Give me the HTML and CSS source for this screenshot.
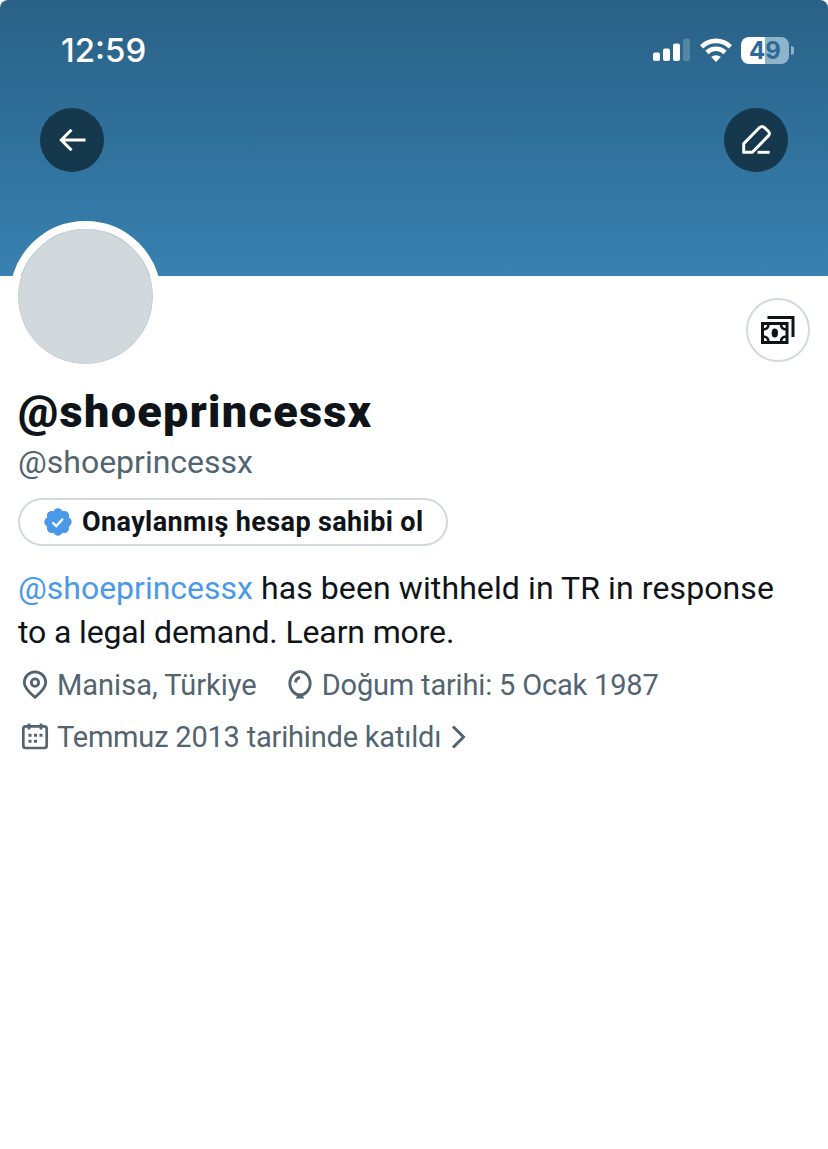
FILE: index.html
```html
<!DOCTYPE html>
<html lang="tr">
<head>
    <meta charset="UTF-8">
    <meta name="viewport" content="width=device-width, initial-scale=1.0">
    <title>@shoeprincessx</title>
    <link rel="stylesheet" href="styles.css">
</head>
<body>

<div class="banner">
    <div class="status-bar">
        <span class="time">12:59</span>
        <div class="status-icons">
            <svg class="signal" width="38" height="24" viewBox="0 0 38 24" fill="#fff">
                <rect x="0" y="14.500" width="7" height="8.500" rx="2"/>
                <rect x="10" y="10.500" width="7" height="12.500" rx="2"/>
                <rect x="20" y="5.500" width="7" height="17.500" rx="2"/>
                <rect x="30" y="0.500" width="7" height="22.500" rx="2" opacity="0.2"/>
            </svg>
            <svg class="wifi" width="32" height="24" viewBox="0 0 32 24" fill="none" stroke="#fff" stroke-width="4.600">
                <path d="M1.600 8.800a20.500 20.500 0 0 1 28.800 0"/>
                <path d="M6.900 14.500a13 13 0 0 1 18.200 0"/>
                <path d="M16 24l-4.800-4.900a7 7 0 0 1 9.600 0z" fill="#fff" stroke="none"/>
            </svg>
            <div class="battery"><span class="level">49</span></div>
            <div class="battery-cap"></div>
        </div>
    </div>
    <div class="actions">
        <div class="round-btn">
            <svg width="64" height="64" viewBox="0 0 64 64" fill="none" stroke="#fff" stroke-width="3">
                <path d="M45.500 32H21M31.500 21.800L21.300 32l10.200 10.200"/>
            </svg>
        </div>
        <div class="round-btn">
            <svg width="64" height="64" viewBox="0 0 64 64" fill="none" stroke="#fff" stroke-width="2.900">
                <path d="M19.700 44.300v-8.600l15.800-16.100q2.500-2.300 5 0l3.800 3.700q2.300 2.300 0 4.600L28.300 44.300z"/>
                <path d="M33.500 44.300h12.200"/>
            </svg>
        </div>
    </div>
</div>

<div class="profile">
    <div class="top-row">
        <div class="avatar"></div>
        <div class="money-btn">
            <svg width="36" height="30" viewBox="0 0 36 30" fill="none" stroke="#0f1419" stroke-width="3">
                <path d="M7.500 2.500h25.500v19.500"/>
                <rect x="2.500" y="8.500" width="24.500" height="19"/>
                <path d="M3 14.500q5.500 0 5.500-5.500M3 21.500q5.500 0 5.500 5.500M26.500 14.500q-5.500 0-5.500-5.500M26.500 21.500q-5.500 0-5.500 5.500" stroke-width="2.600"/>
                <ellipse cx="14.800" cy="18" rx="3.200" ry="4.600" fill="#0f1419" stroke="none"/>
            </svg>
        </div>
    </div>

    <h1 class="name">@shoeprincessx</h1>
    <div class="handle">@shoeprincessx</div>

    <div class="verify">
        <svg width="28" height="28" viewBox="1.500 1.500 21 21">
            <path fill="#4a99e9" d="M22.250 12c0-1.430-.880-2.670-2.190-3.340.460-1.390.200-2.900-.810-3.910s-2.520-1.270-3.910-.810c-.660-1.310-1.910-2.190-3.340-2.190s-2.670.880-3.330 2.190c-1.400-.460-2.910-.200-3.920.810s-1.260 2.520-.800 3.910c-1.310.670-2.200 1.910-2.200 3.340s.890 2.670 2.200 3.340c-.460 1.390-.210 2.900.800 3.910s2.520 1.260 3.910.810c.670 1.310 1.910 2.190 3.340 2.190s2.680-.880 3.340-2.190c1.390.450 2.900.200 3.910-.810s1.270-2.520.810-3.910c1.310-.670 2.190-1.910 2.190-3.340z"/>
            <path fill="none" stroke="#fff" stroke-width="1.700" d="M7.800 12.300l2.900 2.800 5-5.500"/>
        </svg>
        <span>Onaylanmış hesap sahibi ol</span>
    </div>

    <p class="bio"><a>@shoeprincessx</a> <span class="bio-first">has been withheld in TR in response</span><br><span class="bio-second">to a legal demand. Learn more.</span></p>

    <div class="meta">
        <svg width="32" height="32" viewBox="0 0 32 32" fill="none" stroke="#536471" stroke-width="2.800">
            <path d="M16 28.300c-3-2.600-10.700-8.300-10.700-14.800a10.700 10.700 0 0 1 21.400 0c0 6.500-7.700 12.200-10.700 14.800z"/>
            <circle cx="16" cy="13.600" r="3.700"/>
        </svg>
        <span class="place">Manisa, Türkiye</span>
        <svg class="balloon" width="32" height="32" viewBox="0 0 32 32" fill="none" stroke="#536471" stroke-width="2.800">
            <ellipse cx="16" cy="14.300" rx="10.200" ry="11.600"/>
            <path d="M11.500 13.500q.5-4.300 4.500-5"/>
            <path d="M14 25h4l2.300 4.500h-8.600z" fill="#536471" stroke="none"/>
        </svg>
        <span class="birth">Doğum tarihi: 5 Ocak 1987</span>
    </div>
    <div class="meta">
        <svg width="32" height="32" viewBox="0 0 32 32" fill="none" stroke="#536471" stroke-width="2.700">
            <rect x="4.300" y="5.300" width="23.400" height="21.700" rx="2.500"/>
            <path d="M10 2.500v6M22 2.500v6"/>
            <path d="M9.500 14.300h3M15 14.300h3M20.500 14.300h3M9.500 20.300h3M15 20.300h3" stroke-width="3"/>
        </svg>
        <span class="joined">Temmuz 2013 tarihinde katıldı</span>
        <svg class="chevron" width="18" height="28" viewBox="0 0 18 28" fill="none" stroke="#536471" stroke-width="3">
            <path d="M3 3.500L13.500 14 3 24.500"/>
        </svg>
    </div>
</div>

</body>
</html>
```

FILE: styles.css
```css
* {
    box-sizing: border-box;
}
body {
    margin: 0;
    min-height: 100vh;
    font-family: Roboto, "Liberation Sans", sans-serif;
    background-color: #fff;
    color: #0f1419;
}
svg {
    display: block;
    flex-shrink: 0;
}
.banner {
    height: 276px;
    background: linear-gradient(#2a6186 0%, #2f6f99 45%, #3981b0 100%);
    border-radius: 8px 8px 0 0;
}
.status-bar {
    height: 108px;
    padding: 28px 34px 0 61px;
    display: flex;
    justify-content: space-between;
    align-items: flex-start;
}
.time {
    font-family: Inter, sans-serif;
    font-size: 33px;
    font-weight: 500;
    line-height: 44px;
    color: #fff;
}
.status-icons {
    display: flex;
    align-items: center;
    height: 44px;
}
.wifi {
    margin: 0 9px 0 9px;
}
.battery {
    width: 48px;
    height: 27px;
    border-radius: 8px;
    background: linear-gradient(90deg, #fff 50%, #8fb3cb 50%);
    text-align: center;
}
.level {
    display: block;
    font-family: Inter, sans-serif;
    font-size: 24px;
    font-weight: 700;
    line-height: 27px;
    color: #2d6a93;
}
.battery-cap {
    width: 3px;
    height: 9px;
    margin-left: 2px;
    border-radius: 0 4px 4px 0;
    background-color: #8fb3cb;
}
.actions {
    display: flex;
    justify-content: space-between;
    padding: 0 40px;
}
.round-btn {
    width: 64px;
    height: 64px;
    border-radius: 50%;
    background-color: #16384d;
}
.profile {
    padding: 0 18px;
}
.top-row {
    display: flex;
    justify-content: space-between;
    height: 112px;
}
.avatar {
    width: 151px;
    height: 151px;
    margin: -55px 0 0 -8px;
    border: 8px solid #fff;
    border-radius: 50%;
    background-color: #d1d9dd;
    background-clip: padding-box;
    box-shadow: inset 0 0 0 1px #c9cfd5;
}
.money-btn {
    display: flex;
    align-items: center;
    justify-content: center;
    width: 64px;
    height: 64px;
    margin-top: 22px;
    border: 2px solid #d3d9de;
    border-radius: 50%;
}
.name {
    margin: 0;
    font-size: 45px;
    font-weight: 900;
    line-height: 48px;
    letter-spacing: 1.3px;
    white-space: nowrap;
}
.handle {
    margin-top: 8px;
    font-size: 32px;
    line-height: 36px;
    color: #536471;
}
.verify {
    display: flex;
    align-items: center;
    gap: 10px;
    width: 430px;
    height: 48px;
    margin-top: 18px;
    padding-left: 24px;
    border: 2px solid #d3d9de;
    border-radius: 24px;
    font-size: 27px;
    font-weight: 700;
    letter-spacing: 0.38px;
    white-space: nowrap;
}
.bio {
    margin: 20px 0 5px;
    font-size: 32px;
    line-height: 44px;
    white-space: nowrap;
}
.bio a {
    color: #4a99e9;
}
.bio-first {
    letter-spacing: 0.1px;
}
.bio-second {
    letter-spacing: -0.14px;
}
.meta {
    display: flex;
    align-items: center;
    height: 52px;
    font-size: 29px;
    color: #536471;
    white-space: nowrap;
}
.meta svg {
    margin: 0 6px 0 1px;
}
.meta .balloon {
    margin-left: 27px;
}
.meta .chevron {
    margin: 0 0 0 9px;
}
.birth {
    letter-spacing: -0.18px;
}
.joined {
    letter-spacing: -0.2px;
}
```
